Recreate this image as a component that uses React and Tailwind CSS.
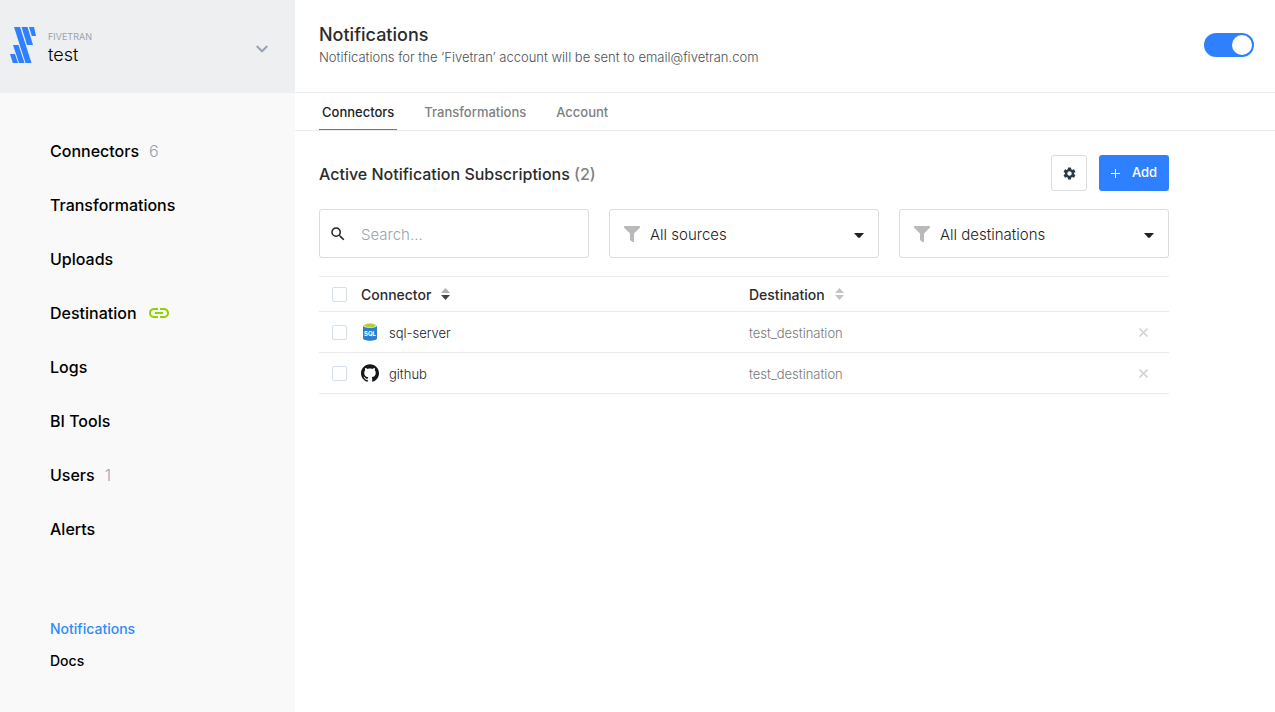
import React, { useState } from 'react';
import { SiGithub } from 'react-icons/si';
import { MdSettings, MdSearch, MdLink } from 'react-icons/md';

const NAV_ITEMS = [
  { label: 'Connectors', count: 6 },
  { label: 'Transformations' },
  { label: 'Uploads' },
  { label: 'Destination', linked: true },
  { label: 'Logs' },
  { label: 'BI Tools' },
  { label: 'Users', count: 1 },
  { label: 'Alerts' },
];

const TABS = ['Connectors', 'Transformations', 'Account'];

const SUBSCRIPTIONS = [
  { name: 'sql-server', destination: 'test_destination', icon: SqlIcon },
  { name: 'github', destination: 'test_destination', icon: GithubIcon },
];

function Logo() {
  return (
    <svg width="26" height="36" viewBox="0 0 26 36" fill="#2f80ff" className="shrink-0" aria-hidden="true">
      <path d="M4 0h6l11.500 36h-6z" />
      <path d="M11.500 0h6l5.500 18h-6z" />
      <path d="M19 0h5l2 9h-4.200z" />
      <path d="M3 18h5.500l6 18h-5.500z" />
      <path d="M0 27h5l3 9h-5.200z" />
    </svg>
  );
}

function SqlIcon() {
  return (
    <svg width="18" height="18" viewBox="0 0 18 18" aria-hidden="true">
      <path d="M2 2.500v13c0 1.200 3.100 2.200 7 2.200s7-1 7-2.200v-13z" fill="#2a7fd0" />
      <ellipse cx="9" cy="2.600" rx="7" ry="2.400" fill="#e8f3da" />
      <ellipse cx="9" cy="2.500" rx="5.600" ry="1.900" fill="#b0d136" />
      <text x="9" y="12.500" textAnchor="middle" fontSize="6" fontWeight="700" fill="#fff">SQL</text>
    </svg>
  );
}

function GithubIcon() {
  return <SiGithub size={18} color="#14171a" aria-hidden="true" />;
}

function SortIcon({ up, down }) {
  return (
    <svg width="9" height="12" viewBox="0 0 9 12" aria-hidden="true">
      <path d="M4.500 0L9 5H0z" fill={up} />
      <path d="M4.500 12L9 7H0z" fill={down} />
    </svg>
  );
}

function Checkbox({ label }) {
  return (
    <input
      type="checkbox"
      aria-label={label}
      className="block size-[15px] appearance-none rounded-xs border border-[#d5deeb] bg-white checked:bg-[#2f80ff]"
    />
  );
}

function FilterSelect({ label, option }) {
  return (
    <label className="grid h-[49px] flex-1 items-center rounded-[3px] border border-[#dcdcdc]">
      <svg width="16" height="16" viewBox="0 0 16 16" fill="#b9b9b9" className="col-start-1 row-start-1 ml-[14px]" aria-hidden="true">
        <path d="M0 0h16v1.500L10 7.500V16H8.500L6 14V7.500L0 1.500z" />
      </svg>
      <select aria-label={label} className="col-start-1 row-start-1 h-full w-full appearance-none pt-1 pr-8 pl-10 text-[15px] font-light text-[#222]">
        <option>{option}</option>
      </select>
      <svg width="10" height="5" viewBox="0 0 10 5" fill="#222" className="pointer-events-none col-start-1 row-start-1 mt-1 mr-[14px] justify-self-end" aria-hidden="true">
        <path d="M0 0h10L6 4.500Q5 5.300 4 4.500z" />
      </svg>
    </label>
  );
}

function Sidebar() {
  return (
    <aside className="flex w-[295px] shrink-0 flex-col bg-[#f9f9f9]">
      <button type="button" className="flex h-[93px] w-full items-center bg-[#edeff1] pr-[27px] pb-[3px] pl-[10px] text-left">
        <Logo />
        <span className="ml-3 flex flex-1 flex-col pt-2">
          <span className="text-[9px] leading-3 text-[#97a3b2]">FIVETRAN</span>
          <span className="text-[18px] leading-6 font-light text-black">test</span>
        </span>
        <svg width="12" height="8" viewBox="0 0 12 8" fill="none" stroke="#97a3b2" strokeWidth="2" className="mt-2" aria-hidden="true">
          <path d="M0.700 1L6 6.300L11.300 1" />
        </svg>
      </button>

      <nav className="flex flex-col px-[50px] pt-[31px] text-black">
        {NAV_ITEMS.map((item) => (
          <a key={item.label} href="#" className="flex h-[54px] items-center gap-[10px] text-[16px] font-medium">
            {item.label}
            {item.count && <span className="font-light text-[#97a3b2]">{item.count}</span>}
            {item.linked && <MdLink size={24} color="#8fd400" aria-hidden="true" />}
          </a>
        ))}
      </nav>

      <nav className="mt-14 flex flex-col px-[50px] pb-9 text-[14px] font-medium text-black">
        <a href="#" className="flex h-8 items-center text-[#2f8bff]">Notifications</a>
        <a href="#" className="flex h-8 items-center">Docs</a>
      </nav>
    </aside>
  );
}

function App() {
  const [enabled, setEnabled] = useState(true);

  return (
    <div className="flex min-h-screen bg-white font-['Inter',sans-serif] text-[#2b2b2b]">
      <Sidebar />

      <main className="min-w-0 flex-1">
        <header className="flex h-[93px] items-center justify-between border-b border-[#ebebeb] pr-[21px] pb-[2px] pl-6">
          <div>
            <h1 className="text-[18px] leading-6 font-medium">Notifications</h1>
            <p className="text-[13px] leading-5 font-light text-[#4c5056]">
              Notifications for the ‘Fivetran’ account will be sent to email@fivetran.com
            </p>
          </div>
          <button
            type="button"
            role="switch"
            aria-checked={enabled}
            aria-label="Notifications"
            onClick={() => setEnabled(!enabled)}
            className={`flex h-6 w-[50px] items-center rounded-full p-[2px] ${enabled ? 'justify-end bg-[#2f80ff]' : 'justify-start bg-gray-300'}`}
          >
            <span className="size-5 rounded-full bg-white" />
          </button>
        </header>

        <div role="tablist" className="flex h-[38px] gap-6 border-b border-[#ebebeb] px-6 text-[13px] font-medium">
          {TABS.map((tab, idx) => (
            <button
              key={tab}
              type="button"
              role="tab"
              aria-selected={idx === 0}
              className={`border-b px-[3px] pt-1 ${idx === 0 ? 'border-[#2f80ff] text-[#222]' : 'border-transparent text-[#808080]'}`}
            >
              {tab}
            </button>
          ))}
        </div>

        <section className="mr-[106px] ml-6 pt-6">
          <div className="flex items-center gap-3">
            <h2 className="flex-1 pt-[2px] text-[16px] font-medium">
              Active Notification Subscriptions <span className="text-[#808080]">(2)</span>
            </h2>
            <button type="button" aria-label="Settings" className="flex size-9 items-center justify-center rounded-[3px] border border-[#dcdcdc]">
              <MdSettings size={15} color="#2b3a45" />
            </button>
            <button type="button" className="flex h-9 w-[70px] items-center justify-center gap-3 rounded-[3px] bg-[#2f80ff] text-[13px] font-medium text-white">
              <svg width="9" height="9" viewBox="0 0 9 9" stroke="currentColor" aria-hidden="true">
                <path d="M4.500 0v9M0 4.500h9" />
              </svg>
              Add
            </button>
          </div>

          <div className="mt-[18px] flex gap-5">
            <label className="grid h-[49px] flex-1 items-center rounded-[3px] border border-[#dcdcdc]">
              <MdSearch size={18} color="#222" className="col-start-1 row-start-1 ml-[9px]" aria-hidden="true" />
              <input
                type="text"
                aria-label="Search"
                placeholder="Search..."
                className="col-start-1 row-start-1 h-full w-full pt-[2px] pr-3 pl-[41px] text-[15px] font-light outline-none placeholder:text-[#97a3b2]"
              />
            </label>
            <FilterSelect label="Source" option="All sources" />
            <FilterSelect label="Destination" option="All destinations" />
          </div>

          <table className="mt-[18px] w-full table-fixed border-t border-[#ebebeb] text-left">
            <colgroup>
              <col className="w-[42px]" />
              <col className="w-[388px]" />
              <col />
              <col className="w-[52px]" />
            </colgroup>
            <thead>
              <tr className="h-[35px] border-b border-[#ebebeb] text-[14px]">
                <th className="pl-[13px]">
                  <Checkbox label="Select all" />
                </th>
                <th className="font-medium">
                  <button type="button" className="flex items-center gap-[10px]">
                    Connector <SortIcon up="#b0b0b0" down="#444" />
                  </button>
                </th>
                <th className="font-medium">
                  <button type="button" className="flex items-center gap-[10px]">
                    Destination <SortIcon up="#c4c4c4" down="#c4c4c4" />
                  </button>
                </th>
                <th />
              </tr>
            </thead>
            <tbody>
              {SUBSCRIPTIONS.map(({ name, destination, icon: Icon }) => (
                <tr key={name} className="h-[41px] border-b border-[#ebebeb] text-[13px]">
                  <td className="pl-[13px]">
                    <Checkbox label={`Select ${name}`} />
                  </td>
                  <td>
                    <span className="flex items-center gap-[10px]">
                      <Icon />
                      <span className="pt-[3px] font-light text-[#222]">{name}</span>
                    </span>
                  </td>
                  <td className="pt-[3px] font-light text-[#777]">{destination}</td>
                  <td>
                    <button type="button" aria-label={`Remove ${name}`} className="ml-[22px] block">
                      <svg width="9" height="9" viewBox="0 0 9 9" stroke="#d4d4d4" strokeWidth="1.600" aria-hidden="true">
                        <path d="M0.500 0.500l8 8M8.500 0.500l-8 8" />
                      </svg>
                    </button>
                  </td>
                </tr>
              ))}
            </tbody>
          </table>
        </section>
      </main>
    </div>
  );
}

export default App;
